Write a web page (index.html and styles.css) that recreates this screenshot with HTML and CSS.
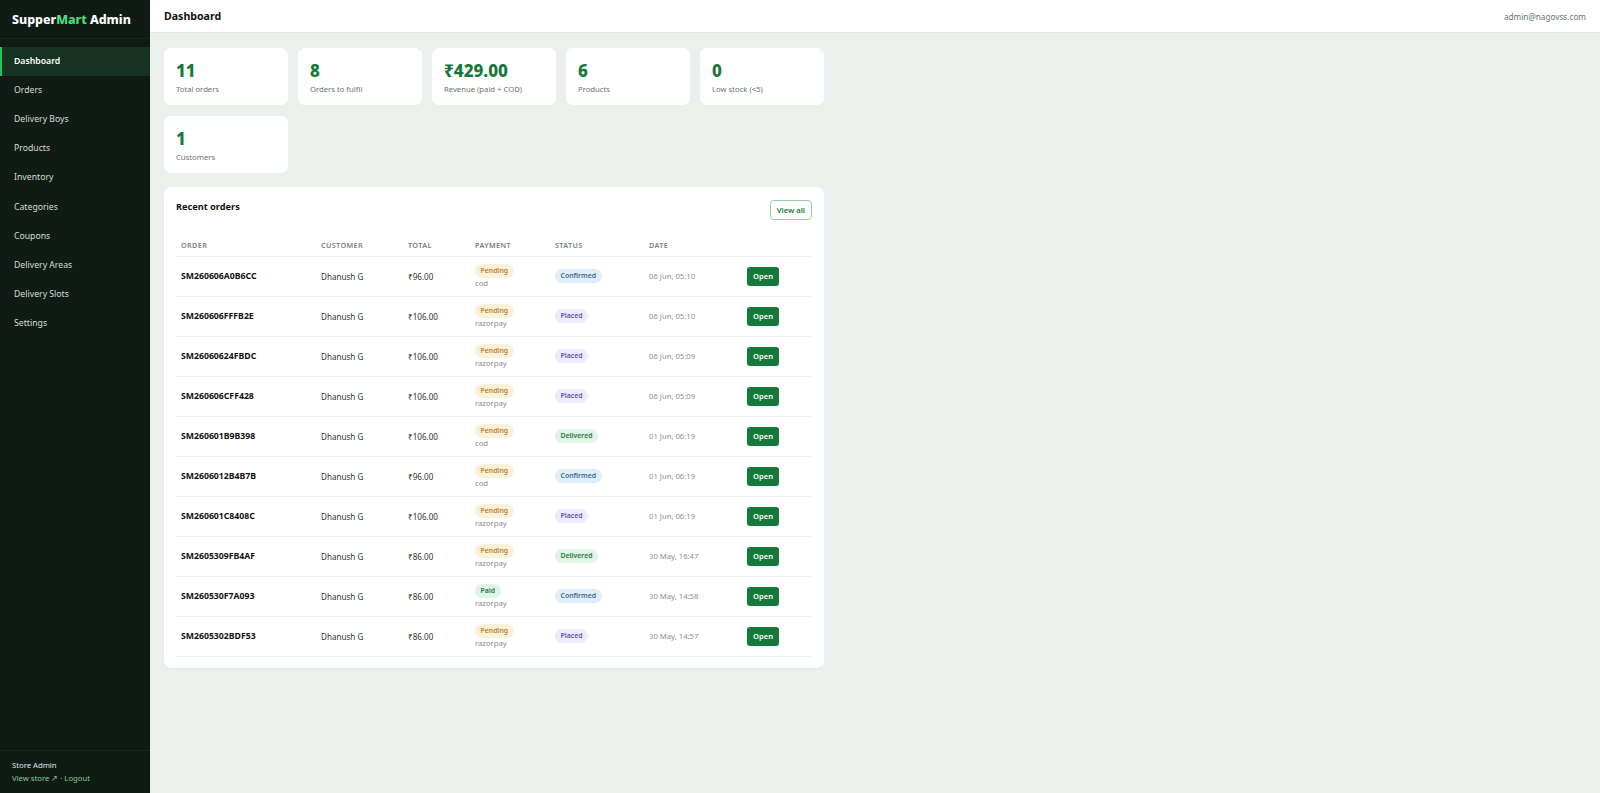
FILE: index.html
```html
<!DOCTYPE html>
<html lang="en">
<head>
    <meta charset="UTF-8">
    <meta name="viewport" content="width=device-width, initial-scale=1.0">
    <title>SupperMart Admin - Dashboard</title>
    <link rel="stylesheet" href="styles.css">
</head>
<body>
    <div class="app">
        <!-- Sidebar -->
        <aside class="sidebar">
            <div class="brand">Supper<span class="brand-accent">Mart</span> Admin</div>
            <nav class="nav">
                <a class="nav-item active" href="#">Dashboard</a>
                <a class="nav-item" href="#">Orders</a>
                <a class="nav-item" href="#">Delivery Boys</a>
                <a class="nav-item" href="#">Products</a>
                <a class="nav-item" href="#">Inventory</a>
                <a class="nav-item" href="#">Categories</a>
                <a class="nav-item" href="#">Coupons</a>
                <a class="nav-item" href="#">Delivery Areas</a>
                <a class="nav-item" href="#">Delivery Slots</a>
                <a class="nav-item" href="#">Settings</a>
            </nav>
            <div class="sidebar-footer">
                <div>Store Admin</div>
                <div class="footer-links"><a href="#">View store ↗</a> · <a href="#">Logout</a></div>
            </div>
        </aside>

        <!-- Main -->
        <div class="main">
            <header class="topbar">
                <h1 class="page-title">Dashboard</h1>
                <span class="user-email">admin@nagovss.com</span>
            </header>

            <div class="content">
                <div class="stats">
                    <div class="stat-card"><div class="stat-value">11</div><div class="stat-label">Total orders</div></div>
                    <div class="stat-card"><div class="stat-value">8</div><div class="stat-label">Orders to fulfil</div></div>
                    <div class="stat-card"><div class="stat-value">₹429.00</div><div class="stat-label">Revenue (paid + COD)</div></div>
                    <div class="stat-card"><div class="stat-value">6</div><div class="stat-label">Products</div></div>
                    <div class="stat-card"><div class="stat-value">0</div><div class="stat-label">Low stock (&lt;5)</div></div>
                    <div class="stat-card"><div class="stat-value">1</div><div class="stat-label">Customers</div></div>
                </div>

                <section class="panel">
                    <div class="panel-head">
                        <h2 class="panel-title">Recent orders</h2>
                        <a class="btn-outline" href="#">View all</a>
                    </div>
                    <table class="orders">
                        <thead>
                            <tr>
                                <th class="col-order">Order</th>
                                <th class="col-customer">Customer</th>
                                <th class="col-total">Total</th>
                                <th class="col-payment">Payment</th>
                                <th class="col-status">Status</th>
                                <th class="col-date">Date</th>
                                <th class="col-action"></th>
                            </tr>
                        </thead>
                        <tbody>
                            <tr>
                                <td class="order-id">SM260606A0B6CC</td>
                                <td>Dhanush G</td>
                                <td>₹96.00</td>
                                <td><span class="badge pending">Pending</span><div class="sub">cod</div></td>
                                <td><span class="badge confirmed">Confirmed</span></td>
                                <td class="date">06 Jun, 05:10</td>
                                <td><a class="btn-open" href="#">Open</a></td>
                            </tr>
                            <tr>
                                <td class="order-id">SM260606FFFB2E</td>
                                <td>Dhanush G</td>
                                <td>₹106.00</td>
                                <td><span class="badge pending">Pending</span><div class="sub">razorpay</div></td>
                                <td><span class="badge placed">Placed</span></td>
                                <td class="date">06 Jun, 05:10</td>
                                <td><a class="btn-open" href="#">Open</a></td>
                            </tr>
                            <tr>
                                <td class="order-id">SM26060624FBDC</td>
                                <td>Dhanush G</td>
                                <td>₹106.00</td>
                                <td><span class="badge pending">Pending</span><div class="sub">razorpay</div></td>
                                <td><span class="badge placed">Placed</span></td>
                                <td class="date">06 Jun, 05:09</td>
                                <td><a class="btn-open" href="#">Open</a></td>
                            </tr>
                            <tr>
                                <td class="order-id">SM260606CFF428</td>
                                <td>Dhanush G</td>
                                <td>₹106.00</td>
                                <td><span class="badge pending">Pending</span><div class="sub">razorpay</div></td>
                                <td><span class="badge placed">Placed</span></td>
                                <td class="date">06 Jun, 05:09</td>
                                <td><a class="btn-open" href="#">Open</a></td>
                            </tr>
                            <tr>
                                <td class="order-id">SM260601B9B398</td>
                                <td>Dhanush G</td>
                                <td>₹106.00</td>
                                <td><span class="badge pending">Pending</span><div class="sub">cod</div></td>
                                <td><span class="badge delivered">Delivered</span></td>
                                <td class="date">01 Jun, 06:19</td>
                                <td><a class="btn-open" href="#">Open</a></td>
                            </tr>
                            <tr>
                                <td class="order-id">SM2606012B4B7B</td>
                                <td>Dhanush G</td>
                                <td>₹96.00</td>
                                <td><span class="badge pending">Pending</span><div class="sub">cod</div></td>
                                <td><span class="badge confirmed">Confirmed</span></td>
                                <td class="date">01 Jun, 06:19</td>
                                <td><a class="btn-open" href="#">Open</a></td>
                            </tr>
                            <tr>
                                <td class="order-id">SM260601C8408C</td>
                                <td>Dhanush G</td>
                                <td>₹106.00</td>
                                <td><span class="badge pending">Pending</span><div class="sub">razorpay</div></td>
                                <td><span class="badge placed">Placed</span></td>
                                <td class="date">01 Jun, 06:19</td>
                                <td><a class="btn-open" href="#">Open</a></td>
                            </tr>
                            <tr>
                                <td class="order-id">SM2605309FB4AF</td>
                                <td>Dhanush G</td>
                                <td>₹86.00</td>
                                <td><span class="badge pending">Pending</span><div class="sub">razorpay</div></td>
                                <td><span class="badge delivered">Delivered</span></td>
                                <td class="date">30 May, 16:47</td>
                                <td><a class="btn-open" href="#">Open</a></td>
                            </tr>
                            <tr>
                                <td class="order-id">SM260530F7A093</td>
                                <td>Dhanush G</td>
                                <td>₹86.00</td>
                                <td><span class="badge paid">Paid</span><div class="sub">razorpay</div></td>
                                <td><span class="badge confirmed">Confirmed</span></td>
                                <td class="date">30 May, 14:58</td>
                                <td><a class="btn-open" href="#">Open</a></td>
                            </tr>
                            <tr>
                                <td class="order-id">SM2605302BDF53</td>
                                <td>Dhanush G</td>
                                <td>₹86.00</td>
                                <td><span class="badge pending">Pending</span><div class="sub">razorpay</div></td>
                                <td><span class="badge placed">Placed</span></td>
                                <td class="date">30 May, 14:57</td>
                                <td><a class="btn-open" href="#">Open</a></td>
                            </tr>
                        </tbody>
                    </table>
                </section>
            </div>
        </div>
    </div>
</body>
</html>
```

FILE: styles.css
```css
* {
    box-sizing: border-box;
}
body {
    margin: 0;
    font-family: "Noto Sans", "Open Sans", sans-serif;
    color: #1f2a24;
    background: #ecf0ed;
}
a {
    text-decoration: none;
    color: inherit;
}
.app {
    display: flex;
    min-height: 100vh;
}

/* Sidebar */
.sidebar {
    width: 150px;
    flex-shrink: 0;
    height: 100vh;
    background: #111b16;
    display: flex;
    flex-direction: column;
}
.brand {
    height: 39px;
    display: flex;
    align-items: center;
    padding: 0 12px;
    font-size: 12.4px;
    font-weight: 800;
    color: #fff;
    border-bottom: 1px solid #1b2621;
    white-space: pre;
}
.brand-accent {
    color: #4ade80;
}
.nav {
    display: flex;
    flex-direction: column;
    padding-top: 7.5px;
}
.nav-item {
    height: 29.1px;
    display: flex;
    align-items: center;
    font-size: 8.7px;
    color: #d2ddd6;
    border-left: 2px solid transparent;
    padding-left: 12px;
}
.nav-item.active {
    background: #163321;
    border-left-color: #22c55e;
    color: #fff;
    font-weight: 600;
}
.sidebar-footer {
    margin-top: auto;
    border-top: 1px solid #1b2621;
    padding: 8px 12px;
    font-size: 7.7px;
    line-height: 13px;
    color: #dfe6e2;
}
.footer-links {
    color: #86c99b;
}

/* Main */
.main {
    flex: 1;
    display: flex;
    flex-direction: column;
}
.topbar {
    height: 33px;
    background: #fff;
    border-bottom: 1px solid #e3e8e4;
    display: flex;
    align-items: center;
    justify-content: space-between;
    padding: 0 14px;
}
.page-title {
    margin: 0;
    font-size: 10.6px;
    font-weight: 700;
    color: #111;
}
.user-email {
    font-size: 8.2px;
    color: #6b7470;
}
.content {
    padding: 15px 14px;
    width: 688px;
}

/* Stat cards */
.stats {
    display: grid;
    grid-template-columns: repeat(5, 1fr);
    gap: 11px 10px;
}
.stat-card {
    background: #fff;
    border-radius: 7px;
    height: 57px;
    padding: 12px 12px 11px;
}
.stat-value {
    font-size: 17px;
    font-weight: 800;
    color: #16793b;
    line-height: 22px;
}
.stat-label {
    font-size: 7.7px;
    color: #6b7470;
    margin-top: 1.5px;
}

/* Recent orders */
.panel {
    margin-top: 14px;
    background: #fff;
    border-radius: 7px;
    padding: 13px 12px 11px;
    box-shadow: 0 1px 2px rgba(0, 0, 0, 0.04);
}
.panel-head {
    display: flex;
    justify-content: space-between;
    align-items: flex-start;
    margin-bottom: 14px;
}
.panel-title {
    margin: 0;
    font-size: 9.2px;
    font-weight: 700;
    color: #111;
    line-height: 14px;
}
.btn-outline {
    height: 20px;
    display: flex;
    align-items: center;
    padding: 0 6px;
    border: 1px solid #8fd0a6;
    border-radius: 4px;
    font-size: 7.6px;
    font-weight: 600;
    color: #16793b;
}
.orders {
    width: 100%;
    border-collapse: collapse;
    table-layout: fixed;
}
.orders th {
    text-align: left;
    font-size: 7.2px;
    font-weight: 600;
    letter-spacing: 0.4px;
    text-transform: uppercase;
    color: #77817c;
    height: 22px;
    padding: 0 5px;
    border-bottom: 1px solid #edf0ee;
}
.col-order { width: 140px; }
.col-customer { width: 87px; }
.col-total { width: 67px; }
.col-payment { width: 80px; }
.col-status { width: 94px; }
.col-date { width: 98px; }
.col-action { width: 70px; }
.orders td {
    height: 40px;
    padding: 0 5px;
    font-size: 8.1px;
    color: #333;
    border-bottom: 1px solid #edf0ee;
    vertical-align: middle;
}
.orders td.order-id {
    font-size: 8.7px;
    font-weight: 700;
    color: #111;
}
.orders td.date {
    font-size: 7.7px;
    color: #8a918e;
}
.badge {
    display: inline-block;
    height: 14px;
    line-height: 14px;
    padding: 0 5.5px;
    border-radius: 7px;
    font-size: 6.9px;
    font-weight: 600;
}
.badge.pending { background: #fdf0da; color: #b7862c; }
.badge.confirmed { background: #e2eef7; color: #346b95; }
.badge.placed { background: #ebebfc; color: #5756c4; }
.badge.delivered, .badge.paid { background: #dff3e6; color: #1e7b41; }
.sub {
    font-size: 7.7px;
    color: #858c89;
    line-height: 10px;
}
.btn-open {
    display: inline-flex;
    align-items: center;
    height: 19px;
    padding: 0 6px;
    border-radius: 3px;
    background: #16793b;
    color: #fff;
    font-size: 7.6px;
    font-weight: 600;
}
```
